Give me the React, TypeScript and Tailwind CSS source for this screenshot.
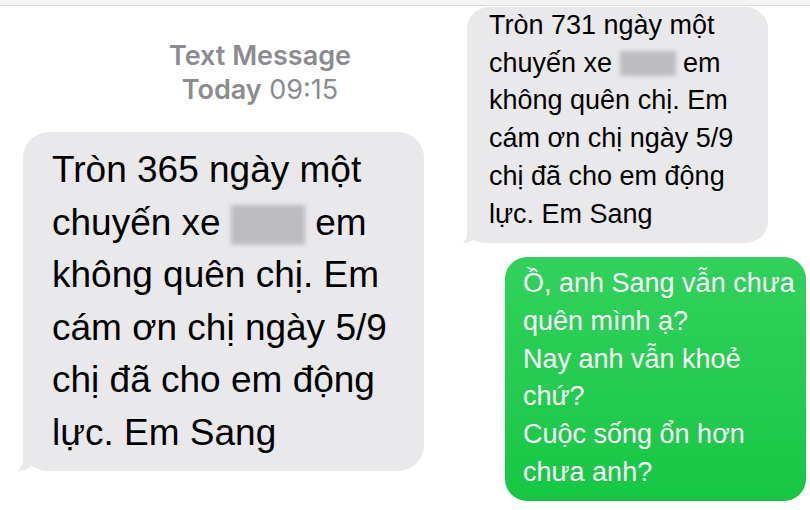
import React from 'react';

// tail drawn under the bottom-left corner of a received bubble
function Tail({ big }: { big?: boolean }) {
  if (big) {
    return (
      <svg
        className="absolute left-[-7px] bottom-0"
        width="40"
        height="30"
        viewBox="0 0 40 30"
      >
        <path
          d="M7 0 L7 18 C7 24 4 28 1 30 C7 30 12 28 16 25 C20 28 26 30 34 30 L40 30 L40 0 Z"
          fill="#e9e9eb"
        />
      </svg>
    );
  }
  return (
    <svg
      className="absolute left-[-5px] bottom-0"
      width="30"
      height="22"
      viewBox="0 0 30 22"
    >
      <path
        d="M5 0 L5 12 C5 17 3 20 0.5 22 C5 22 9 21 12 19 C15 21 20 22 26 22 L30 22 L30 0 Z"
        fill="#e9e9eb"
      />
    </svg>
  );
}

function Redacted({ w, h, drop }: { w: string; h: string; drop: string }) {
  return <span className={`inline-block bg-[#bdbdc1] blur-[2px] ${w} ${h} ${drop}`} />;
}

export default function App() {
  return (
    <div className="w-[810px] h-[510px] bg-white overflow-hidden font-['Liberation_Sans',Arial,sans-serif] text-black">
      {/* top edge of the screenshots */}
      <div className="h-[6px] bg-[#f3f3f3] border-b border-[#dcdcdc]" />

      <div className="flex">
        {/* ---- left screenshot ---- */}
        <div className="w-[445px] shrink-0 flex flex-col">
          <div className="mt-[33px] ml-[140px] w-[240px] text-center font-['Inter',sans-serif] text-[27px] leading-[34px] text-[#8b8b90]">
            <p className="font-semibold">Text Message</p>
            <p>
              <span className="font-semibold">Today</span> 09:15
            </p>
          </div>

          <div className="relative mt-[25px] ml-[23px] w-[401px] rounded-[26px] bg-[#e9e9eb] pl-[29px] pt-[12px] pb-[12px] text-[37px] leading-[52.5px]">
            <Tail big />
            <p className="relative">
              Tròn 365 ngày một
              <br />
              chuyến xe <Redacted w="w-[74px]" h="h-[40px]" drop="align-[-10px]" /> em
              <br />
              không quên chị. Em
              <br />
              cám ơn chị ngày 5/9
              <br />
              chị đã cho em động
              <br />
              lực. Em Sang
            </p>
          </div>
        </div>

        {/* ---- right screenshot ---- */}
        <div className="flex-1 flex flex-col text-[27px] leading-[37.7px]">
          <div className="relative mt-[1px] ml-[22px] w-[301px] rounded-[22px] bg-[#e9e9eb] pl-[22px] pb-[10px]">
            <Tail />
            <p className="relative">
              Tròn 731 ngày một
              <br />
              chuyến xe <Redacted w="w-[56px]" h="h-[25px]" drop="align-[-4px]" /> em
              <br />
              không quên chị. Em
              <br />
              cám ơn chị ngày 5/9
              <br />
              chị đã cho em động
              <br />
              lực. Em Sang
            </p>
          </div>

          <div className="mt-[14px] ml-[60px] w-[301px] rounded-[22px] bg-linear-to-b from-[#30d25b] to-[#15c744] pl-[18px] pt-[8px] pb-[10px] text-white">
            <p>
              Ồ, anh Sang vẫn chưa
              <br />
              quên mình ạ?
              <br />
              Nay anh vẫn khoẻ
              <br />
              chứ?
              <br />
              Cuộc sống ổn hơn
              <br />
              chưa anh?
            </p>
          </div>
        </div>
      </div>
    </div>
  );
}
